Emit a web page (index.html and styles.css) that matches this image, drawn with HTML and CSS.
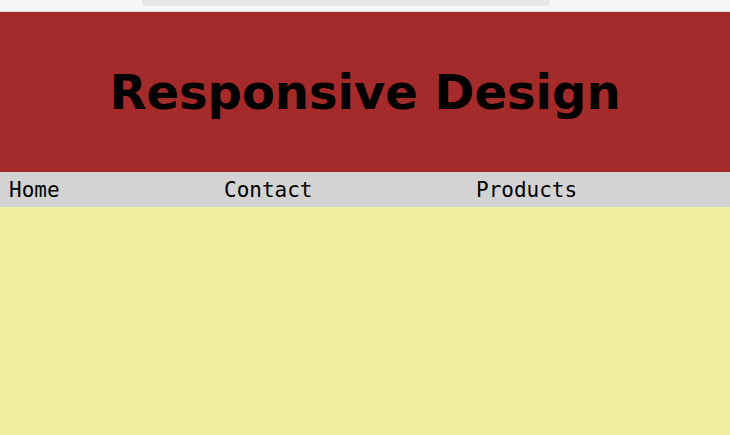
FILE: index.html
```html
<!DOCTYPE html>
<html>
<head>
<meta charset="utf-8">
<link rel="stylesheet" href="styles.css">
</head>
<body>
<div class="topstrip"><div class="tab"></div></div>
<header class="hero"><h1>Responsive Design</h1></header>
<nav class="nav">
  <a>Home</a>
  <a>Contact</a>
  <a>Products</a>
</nav>
<main class="content"></main>
</body>
</html>
```
FILE: styles.css
```css
html, body { margin: 0; padding: 0; height: 100%; }
body { background: #f0eea0; display: flex; flex-direction: column; }
.topstrip {
  height: 11px;
  background: #f7f7f7;
  border-bottom: 1px solid #dcdcdc;
  display: flex;
  justify-content: flex-start;
  padding-left: 142px;
}
.tab {
  width: 408px;
  height: 6px;
  background: #e8e8e8;
  border-radius: 0 0 3px 3px;
}
.hero {
  height: 160px;
  background: #a52a2a;
  display: flex;
  align-items: center;
  justify-content: center;
}
.hero h1 {
  margin: 0;
  font-family: "DejaVu Sans", sans-serif;
  font-weight: bold;
  font-size: 48px;
  color: #000;
}
.nav {
  height: 35px;
  background: #d3d3d3;
  display: grid;
  grid-template-columns: 215px 252px 1fr;
  padding-left: 9px;
  align-items: center;
  font-family: "DejaVu Sans Mono", monospace;
  font-size: 21px;
  color: #000;
}
.content { flex: 1; background: #f0eea0; }
```
